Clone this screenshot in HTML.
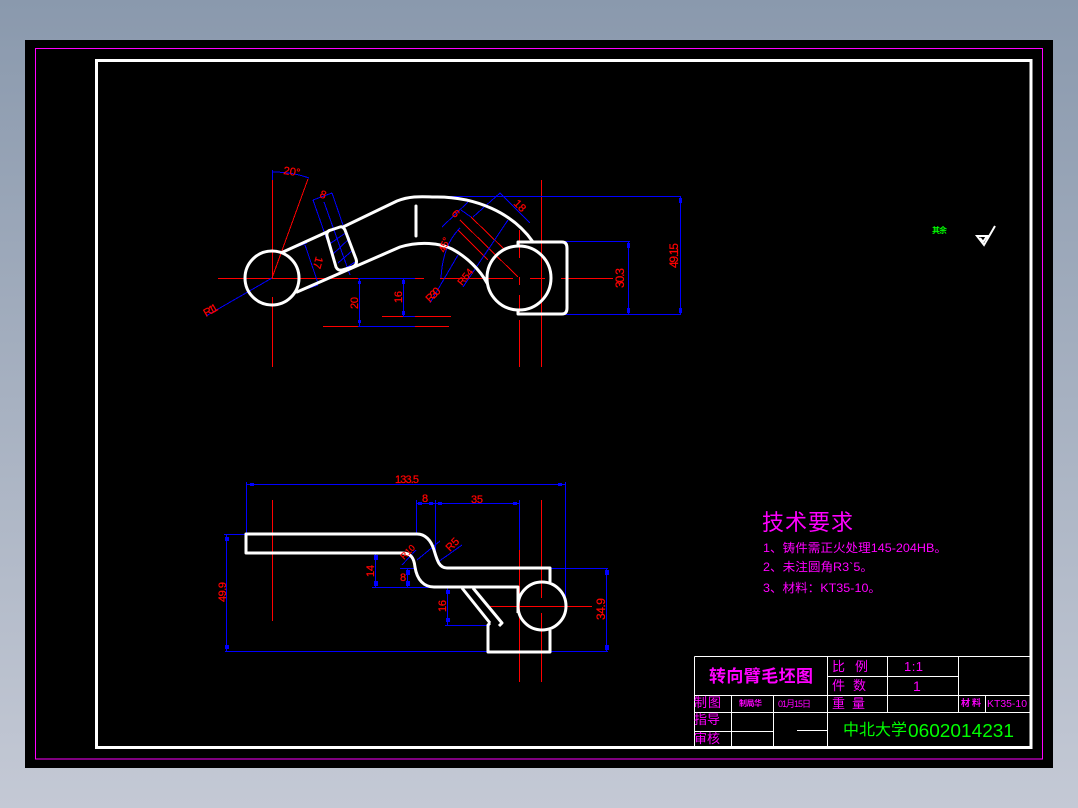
<!DOCTYPE html>
<html><head><meta charset="utf-8"><style>
html,body{margin:0;padding:0;width:1078px;height:808px;overflow:hidden;background:linear-gradient(#8a99ad,#c4c9d5)}
svg{position:absolute;left:0;top:0;display:block}
text{font-family:"Liberation Sans","Noto Sans CJK SC",sans-serif}
.d text{stroke:#f00;stroke-width:.25}
</style></head><body>
<svg width="1078" height="808" viewBox="0 0 1078 808" xmlns="http://www.w3.org/2000/svg">
<rect x="25" y="40" width="1028" height="728" fill="#000"/>
<rect x="35.5" y="48.5" width="1007" height="710.5" fill="none" stroke="#f0f" stroke-width="1" shape-rendering="crispEdges"/>
<rect x="96.5" y="60.5" width="934.5" height="687" fill="none" stroke="#fff" stroke-width="3" shape-rendering="crispEdges"/>

<!-- red centre lines -->
<g stroke="#f00" stroke-width="1" fill="none" shape-rendering="crispEdges">
<path d="M218 278.500H297M287 278.500H358M415 278.500H424M440 278.500H513M530 278.500H545M561 278.500H613"/>
<path d="M272.500 172V278M272.500 297V367M272 278L308 179"/>
<path d="M519.500 230V258M519.500 277V285M519.500 295V312M519.500 320V367"/>
<path d="M541.500 180V367"/>
<path d="M382 316.500H403M415 316.500H451M323 326.500H358M415 326.500H449"/>
<path d="M460 220L518 277M471 217L505 250M458 230L488 260"/>
<path d="M272.500 500V621M519.500 550V682M541.500 500V598M541.500 613V682M490 606.500H592"/>
</g>

<!-- blue dimensions -->
<g stroke="#00f" stroke-width="1" fill="none" shape-rendering="crispEdges">
<path d="M272.500 170V180M272 172C286 172 298 174 309 178"/>
<path d="M206 316L272 278"/>
<path d="M313 200L332 193M313 200L327 240M332 193L343 225M324 202L350 275"/>
<path d="M328 245L347 232M332 255L350 238M338 263L353 250M343 270L355 262"/>
<path d="M305 245L318 283"/>
<path d="M283 252L307 243M297 292L318 285"/>
<path d="M358 278.500H415M359.500 278V327M403.500 278V316M403 316.500H415M358 326.500H415"/>
<path d="M441 278C442 258 448 240 460 228"/>
<path d="M442 227L468 202M461 210L471 217"/>
<path d="M473 217L500 193L530 223M500 193L507 200"/>
<path d="M463 287L508 220M430 303L458 255"/>
<path d="M430 196.500H681M680.500 197V314M563 241.500H630M628.500 242V314M563 314.500H681"/>
<path d="M246.500 482V534M246 484.500H565M565.500 482V605"/>
<path d="M416.500 500V534M435.500 500V553M416 503.500H519M519.500 500V550"/>
<path d="M224 534.500H246M226.500 534V651M225 651.500H608M606.500 568V651M550 568.500H608"/>
<path d="M373 553.500H402M375.500 553V587M372 587.500H489M407.500 568V587M400 568.500H416M447.500 587V625M445 625.500H490"/>
<path d="M402 565L416 550M438 562L462 545M440 541L417 560"/>
</g>
<g fill="#00f">
<rect x="358" y="281" width="3" height="3"/><rect x="358" y="320" width="3" height="3"/>
<rect x="402" y="280" width="3" height="4"/><rect x="402" y="311" width="3" height="4"/>
<rect x="679" y="198" width="3" height="5"/><rect x="679" y="308" width="3" height="5"/>
<rect x="627" y="243" width="3" height="5"/><rect x="627" y="308" width="3" height="5"/>
<rect x="225" y="537" width="4" height="4"/><rect x="225" y="645" width="4" height="4"/>
<rect x="605" y="570" width="4" height="5"/><rect x="605" y="645" width="4" height="5"/>
<rect x="374" y="555" width="4" height="5"/><rect x="374" y="581" width="4" height="5"/>
<rect x="406" y="570" width="4" height="5"/><rect x="406" y="581" width="4" height="5"/>
<rect x="446" y="590" width="4" height="4"/><rect x="446" y="618" width="4" height="4"/>
<rect x="250" y="483" width="4" height="3"/><rect x="558" y="483" width="4" height="3"/>
<rect x="418" y="502" width="4" height="3"/><rect x="429" y="502" width="4" height="3"/>
<rect x="438" y="502" width="4" height="3"/><rect x="513" y="502" width="4" height="3"/>
</g>

<!-- white outlines, top view -->
<g stroke="#fff" stroke-width="3" fill="none" stroke-linejoin="round" stroke-linecap="round">
<circle cx="272" cy="278" r="27"/>
<circle cx="519" cy="278" r="32"/>
<path d="M283 252L327 232M343 227L397 201C412 195 425 197 437 197C475 197 512 212 533 242"/>
<path d="M297 292L400 247C420 241 440 243 452 249C467 257 480 270 487 283"/>
<path d="M327 236Q326 231 331 230L340 227Q343 226 345 230L356 259Q358 265 352 267L342 270Q338 271 336 267Z"/>
<path d="M416 206V236"/>
<path d="M518 246V242H562Q567 242 567 248V308Q567 314 562 314H518V310"/>
</g>

<!-- white outlines, bottom view -->
<g stroke="#fff" stroke-width="3" fill="none" stroke-linejoin="round">
<circle cx="542" cy="606" r="24"/>
<path d="M417 534H246V553H402C411 553 414 558 415 567C417 580 424 587 434 587H518V613"/>
<path d="M246 534H417C425 534 431 540 434 550C437 560 439 568 447 568H550V582"/>
<path d="M462 588L490 623M473 588L502 623L499 626"/>
<path d="M490 623L488 625V652H550V630"/>
</g>

<!-- red dimension text -->
<g class="d" fill="#f00" font-size="11">
<text x="283" y="174" transform="rotate(8 283 174)" textLength="17" lengthAdjust="spacingAndGlyphs">20°</text>
<text x="319" y="197" transform="rotate(20 319 197)">8</text>
<text transform="translate(316 256) rotate(105)" textLength="12">17</text>
<text transform="translate(206 317) rotate(-30)" textLength="15">R11</text>
<text transform="translate(358 309) rotate(-90)" textLength="12">20</text>
<text transform="translate(402 303) rotate(-90)" textLength="12">16</text>
<text transform="translate(430 303) rotate(-45)" textLength="16">R30</text>
<text transform="translate(445 253) rotate(-70)" font-size="10">45°</text>
<text transform="translate(462 286) rotate(-50)" font-size="10">R54</text>
<text transform="translate(451 214) rotate(45)">6</text>
<text transform="translate(513 204) rotate(45)">18</text>
<text transform="translate(624 288) rotate(-90)" font-size="12" textLength="20">30.3</text>
<text transform="translate(678 268) rotate(-90)" font-size="12" textLength="25">49.15</text>
<text x="395" y="483" textLength="24">133.5</text>
<text x="422" y="502">8</text>
<text x="471" y="503" textLength="12">35</text>
<text transform="translate(226 602) rotate(-90)" textLength="20">49.9</text>
<text transform="translate(374 577) rotate(-90)" textLength="12">14</text>
<text x="400" y="581">8</text>
<text transform="translate(404 560) rotate(-45)" font-size="9">R10</text>
<text transform="translate(450 552) rotate(-45)">R5</text>
<text transform="translate(446 612) rotate(-90)" textLength="12">16</text>
<text transform="translate(605 620) rotate(-90)" font-size="12" textLength="22">34.9</text>
</g>

<!-- tech notes -->
<g fill="#f0f">
<text x="762" y="530" font-size="22" textLength="91">技术要求</text>
<text x="763" y="552" font-size="12" textLength="184" lengthAdjust="spacingAndGlyphs">1、铸件需正火处理145-204HB。</text>
<text x="763" y="571" font-size="12" textLength="110" lengthAdjust="spacingAndGlyphs">2、未注圆角R3`5。</text>
<text x="763" y="592" font-size="12" textLength="118" lengthAdjust="spacingAndGlyphs">3、材料：KT35-10。</text>
</g>

<!-- roughness -->
<text x="932" y="233" font-size="8" fill="#0f0" font-weight="bold" textLength="15">其余</text>
<path d="M995 226L984 245L977 236H987L983 242L980 238" stroke="#fff" stroke-width="2" fill="none"/>

<!-- title block -->
<g stroke="#fff" stroke-width="1" fill="none" shape-rendering="crispEdges">
<path d="M694.500 656.500H1030M694.500 656.500V747M827.500 656.500V747M887.500 656.500V712M958.500 656.500V712M985.500 695V712M827.500 676.500H958.500M694.500 695.500H1030M694.500 712.500H1030M731.500 695.500V747M773.500 695.500V747M694.500 731.500H773.500M797 730.500H827.500"/>
</g>
<g fill="#f0f">
<text x="709" y="682" font-size="17" font-weight="bold" textLength="104">转向臂毛坯图</text>
<text x="832" y="671" font-size="13" textLength="36">比 例</text>
<text x="904" y="671" font-size="13" textLength="19">1:1</text>
<text x="832" y="690" font-size="13" textLength="34">件 数</text>
<text x="913" y="691" font-size="14">1</text>
<text x="694" y="707" font-size="13" textLength="27">制图</text>
<text x="739" y="706" font-size="8" font-weight="bold" textLength="23">制局华</text>
<text x="778" y="707" font-size="9" textLength="33">01月15日</text>
<text x="832" y="708" font-size="13" textLength="33">重 量</text>
<text x="961" y="706" font-size="9" font-weight="bold" textLength="20">材料</text>
<text x="987" y="707" font-size="10" textLength="40" lengthAdjust="spacingAndGlyphs">KT35-10</text>
<text x="694" y="724" font-size="13" textLength="26">指导</text>
<text x="694" y="743" font-size="13" textLength="26">审核</text>
</g>
<text x="843" y="735" font-size="16" fill="#0f0" textLength="64">中北大学</text>
<text x="908" y="737" font-size="18" fill="#0f0" textLength="106" lengthAdjust="spacingAndGlyphs">0602014231</text>
</svg>
</body></html>
